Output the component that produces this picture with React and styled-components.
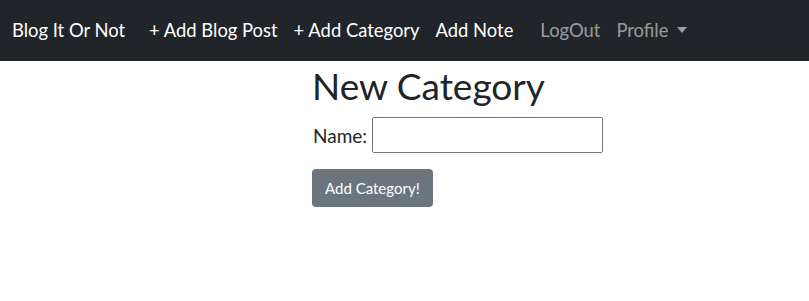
import styled, { createGlobalStyle } from "styled-components";

const Global = createGlobalStyle`
  body {
    margin: 0;
    font-family: "Lato", "Noto Sans", sans-serif;
    background: #fff;
    color: #212529;
  }
`;

const Navbar = styled.nav`
  display: flex;
  align-items: center;
  height: 61px;
  padding: 0 12px 1px;
  box-sizing: border-box;
  background: #212529;
  font-size: 18.4px;
`;

const Brand = styled.a`
  color: #fff;
  margin-right: 24px;
  text-decoration: none;
`;

const NavGroup = styled.div`
  display: flex;
  align-items: center;
  gap: 16px;
  margin-right: ${(p) => p.$space || 0}px;
`;

const NavLink = styled.a`
  color: ${(p) => (p.$muted ? "rgba(255, 255, 255, 0.55)" : "#fff")};
  text-decoration: none;
  display: flex;
  align-items: center;
`;

const Caret = styled.span`
  display: inline-block;
  margin-left: 9px;
  border-top: 6px solid rgba(255, 255, 255, 0.55);
  border-left: 5.5px solid transparent;
  border-right: 5.5px solid transparent;
`;

const Main = styled.main`
  padding-left: 313px;
`;

const Title = styled.h1`
  margin: 3px 0 9px -1px;
  font-size: 37px;
  font-weight: 400;
  line-height: 1.2;
`;

const Field = styled.div`
  display: flex;
  align-items: center;
  gap: 5px;
  font-size: 19px;
`;

const Input = styled.input`
  width: 231px;
  height: 36px;
  box-sizing: border-box;
  border: 1px solid #767676;
  border-radius: 2px;
`;

const Button = styled.button`
  margin: 16px 0 0 -1px;
  height: 38px;
  padding: 0 13px;
  border: none;
  border-radius: 4px;
  background: #6c757d;
  color: #fff;
  font-family: inherit;
  font-size: 15px;
`;

export default function App() {
  return (
    <>
      <Global />
      <Navbar>
        <Brand href="#">Blog It Or Not</Brand>
        <NavGroup $space={27}>
          <NavLink href="#">+ Add Blog Post</NavLink>
          <NavLink href="#">+ Add Category</NavLink>
          <NavLink href="#">Add Note</NavLink>
        </NavGroup>
        <NavGroup>
          <NavLink href="#" $muted>LogOut</NavLink>
          <NavLink href="#" $muted>
            Profile
            <Caret />
          </NavLink>
        </NavGroup>
      </Navbar>
      <Main>
        <Title>New Category</Title>
        <form>
          <Field>
            <label>Name:</label>
            <Input type="text" />
          </Field>
          <Button type="button">Add Category!</Button>
        </form>
      </Main>
    </>
  );
}
